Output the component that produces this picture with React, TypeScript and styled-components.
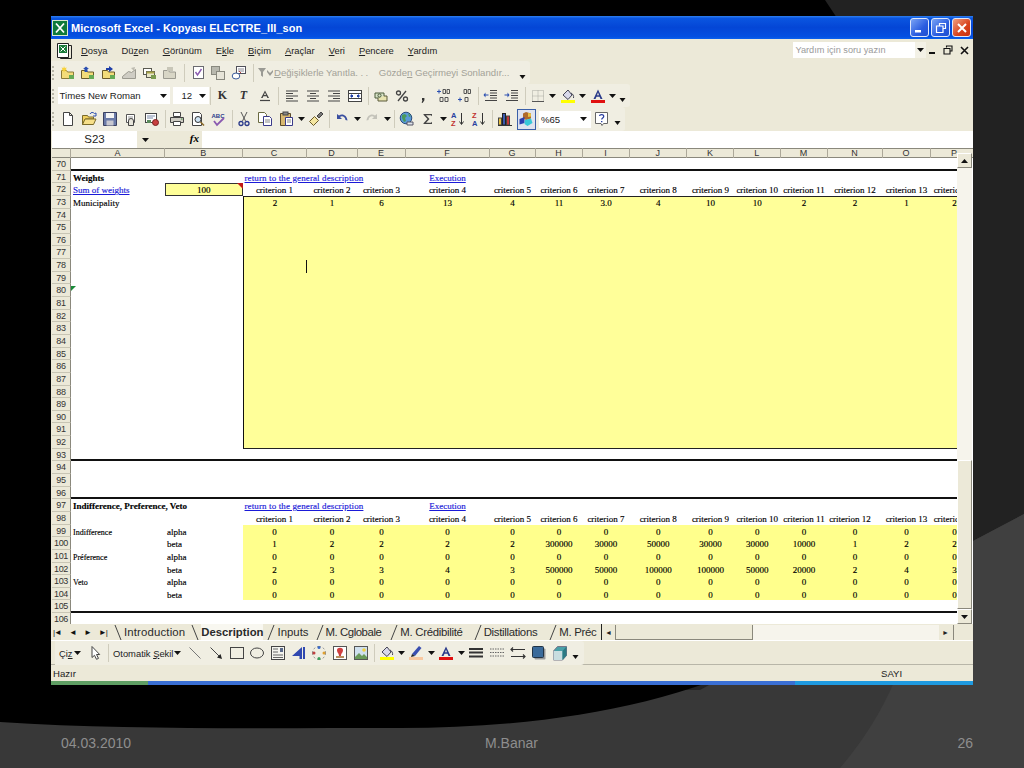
import * as React from "react";
import styled, { createGlobalStyle } from "styled-components";

const GlobalStyle = createGlobalStyle`
  html, body {
    margin: 0;
    padding: 0;
    background: #383838;
  }
`;

const UI_FONT = `"Liberation Sans", Arial, sans-serif`;
const CELL_FONT = `"Liberation Serif", "Times New Roman", serif`;

const COLUMNS = ["A", "B", "C", "D", "E", "F", "G", "H", "I", "J", "K", "L", "M", "N", "O", "P"];
const WIDTHS = [94, 77.5, 64, 51, 48, 84, 46, 47, 47, 57.5, 47, 46.5, 47, 55, 48, 48];
const GRID = WIDTHS.map((w) => `${w}px`).join(" ");

const icons: Record<string, React.ReactNode> = {
  folderNew: (
    <>
      <path d="M1.5 5.5h5l1 1.5h6v6.5h-12z" fill="#f3dc7a" stroke="#8a7a3a" />
      <path d="M4 1l.8 2 2-.6-1 1.8 1.5 1.2H5L4 7.5 3 5.4H1l1.5-1.2-1-1.8 2 .6z" fill="#f7d23c" />
      <rect x="9" y="10" width="5" height="4" fill="#66aa55" />
    </>
  ),
  folderUp: (
    <>
      <path d="M1.5 5.5h5l1 1.5h6v6.5h-12z" fill="#f3dc7a" stroke="#6a5a2a" />
      <path d="M6 1.5l3 2.5H7.5v3h-3V4H3z" fill="#2b4fb0" />
      <rect x="9" y="10" width="5" height="4" fill="#66aa55" />
    </>
  ),
  folderIn: (
    <>
      <path d="M1.5 5.5h5l1 1.5h6v6.5h-12z" fill="#f3dc7a" stroke="#6a5a2a" />
      <path d="M8 1l4 3-4 3V5H5V3h3z" fill="#1f3fa8" />
      <rect x="9" y="10" width="5" height="4" fill="#66aa55" />
    </>
  ),
  chartGrey: (
    <>
      <path d="M1.5 13.5h13v-9l-4 3-3-1-6 5z" fill="#cfcdc4" stroke="#9b9a90" />
      <path d="M10 3l4-1-1 4z" fill="#bdbbb0" />
    </>
  ),
  windows: (
    <>
      <rect x="1.5" y="3.5" width="8" height="6" fill="#fff" stroke="#5a5a50" />
      <rect x="4.5" y="6.5" width="8" height="6" fill="#e8e6c8" stroke="#5a5a50" />
      <rect x="4.5" y="6.5" width="8" height="2" fill="#a7a34a" />
      <rect x="9" y="10" width="5" height="4" fill="#7a9a50" />
    </>
  ),
  folderGrey: (
    <>
      <path d="M1.5 5.5h5l1 1.5h6v6.5h-12z" fill="#d8d6c6" stroke="#9b9a90" />
      <path d="M5 2h6v4H5z" fill="#c8c6b8" />
    </>
  ),
  checkDoc: (
    <>
      <rect x="3.5" y="1.5" width="10" height="12" fill="#fff" stroke="#6a6a70" />
      <path d="M5.5 7l2 3 4-6" fill="none" stroke="#8a5ab0" strokeWidth="1.4" />
    </>
  ),
  sheetsGrey: (
    <>
      <rect x="1.5" y="1.5" width="8" height="8" fill="#b8b8ae" stroke="#88887e" />
      <rect x="6.5" y="6.5" width="8" height="8" fill="#e6e4d8" stroke="#88887e" />
    </>
  ),
  mailSheet: (
    <>
      <rect x="5.5" y="1.5" width="9" height="7" fill="#fff" stroke="#50505a" />
      <path d="M7 4h6M7 6h6" stroke="#8a8a94" />
      <ellipse cx="5" cy="11" rx="3.8" ry="3" fill="#fff" stroke="#3a5a9a" />
      <path d="M8 6l2 2" stroke="#c04040" />
    </>
  ),
  alignL: <path d="M2 3h12M2 5.5h7M2 8h12M2 10.5h7M2 13h12" stroke="#444" fill="none" />,
  alignC: <path d="M2 3h12M5 5.5h6M2 8h12M5 10.5h6M2 13h12" stroke="#444" fill="none" />,
  alignR: <path d="M2 3h12M7 5.5h7M2 8h12M7 10.5h7M2 13h12" stroke="#444" fill="none" />,
  merge: (
    <>
      <rect x="1.5" y="2.5" width="13" height="11" fill="#fff" stroke="#444" />
      <path d="M1.5 5.5h13M1.5 10.5h13" stroke="#444" />
      <path d="M3 8h3M10 8h3M6 8l-1.5-1.3v2.6zM10 8l1.5-1.3v2.6z" stroke="#1f3fa8" fill="#1f3fa8" />
    </>
  ),
  currency: (
    <>
      <path d="M2 5h9v5H2z" fill="#d8e4c8" stroke="#4a5a3a" />
      <path d="M11 8h3v5H5v-3" fill="#e8e4b0" stroke="#5a5a3a" />
      <ellipse cx="6.5" cy="7.5" rx="1.6" ry="1.6" fill="none" stroke="#4a5a3a" />
    </>
  ),
  percent: (
    <>
      <circle cx="4.5" cy="5" r="2" fill="none" stroke="#444" strokeWidth="1.3" />
      <circle cx="11.5" cy="11" r="2" fill="none" stroke="#444" strokeWidth="1.3" />
      <path d="M12 3L4 13" stroke="#444" strokeWidth="1.3" />
    </>
  ),
  comma: <path d="M7 10h2.4v2.2L7.6 15l-1-.4 1-2.4H7z" fill="#333" />,
  incDec: (
    <>
      <path d="M1 3.5h4M3 1.5v4" stroke="#2b4fb0" />
      <path d="M7 1.5h2.5v4H7zM11 1.5h2.5v4H11z" fill="none" stroke="#555" />
      <path d="M4 9.5h3v4H4zM9 9.5h3v4H9z" fill="none" stroke="#555" />
    </>
  ),
  decDec: (
    <>
      <path d="M7 1.5h2.5v4H7zM11 1.5h2.5v4H11z" fill="none" stroke="#555" />
      <path d="M1 11.5h4M3 9.5v4" stroke="#2b4fb0" />
      <path d="M8 9.5h3v4H8z" fill="none" stroke="#555" />
    </>
  ),
  outdent: (
    <>
      <path d="M7 2.5h7M7 5h7M7 7.5h7M7 10h7M2 12.5h12" stroke="#444" fill="none" />
      <path d="M5.5 6.5h-3v-2l-2 2.5 2 2.5v-2h3z" fill="#2b4fb0" />
    </>
  ),
  indent: (
    <>
      <path d="M7 2.5h7M7 5h7M7 7.5h7M7 10h7M2 12.5h12" stroke="#444" fill="none" />
      <path d="M.5 6.5h3v-2l2 2.5-2 2.5v-2h-3z" fill="#2b4fb0" />
    </>
  ),
  borders: (
    <>
      <path d="M2.5 2.5h11v11h-11zM8 2.5v11M2.5 8h11" fill="none" stroke="#a8a8a0" strokeDasharray="1 1" />
      <path d="M2 13.5h12" stroke="#555" />
    </>
  ),
  fill: (
    <>
      <path d="M3 7l5-5 4 5-4 4.5z" fill="#d8d8ea" stroke="#445" />
      <path d="M11 5c2 1 3 3 2.5 5" stroke="#445" fill="none" />
      <rect x="1" y="12" width="14" height="3" fill="#ffff00" />
    </>
  ),
  fontColor: (
    <>
      <path d="M8 1.5L3.5 11h2l1-2.3h3l1 2.3h2zM7 7.2L8 4.5l1 2.7z" fill="#2a3a8a" />
      <rect x="1" y="12" width="14" height="3" fill="#e01010" />
    </>
  ),
  fontUnder: (
    <>
      <path d="M8 2.5L4 10h1.6l.8-1.8h3.2l.8 1.8H12zM7 7l1-2.4L9 7z" fill="#444" />
      <path d="M3 12.5h10" stroke="#444" strokeWidth="1.2" />
    </>
  ),
  newDoc: <path d="M3.5 1.5h6l3 3v10h-9zM9.5 1.5v3h3" fill="#fff" stroke="#444" />,
  open: (
    <>
      <path d="M1.5 4.5h5l1 1.5h5v2h-8l-3 5.5z" fill="#f0d060" stroke="#7a6a2a" />
      <path d="M1.5 13.5l2.5-5.5h11l-2.5 5.5z" fill="#f7e08a" stroke="#7a6a2a" />
      <path d="M9 3c1-2 3-2 4.500-.5L15 2v3h-3" fill="none" stroke="#2b4fb0" />
    </>
  ),
  save: (
    <>
      <path d="M1.500 1.500h13v13h-13z" fill="#6a7aa8" stroke="#3a4060" />
      <rect x="4" y="2" width="8" height="5" fill="#f4f4f4" />
      <rect x="4.500" y="9.500" width="7" height="5" fill="#c8c8d0" />
    </>
  ),
  permission: (
    <>
      <path d="M3.500 3.500h8v8h-8z" fill="#fff" stroke="#555" />
      <path d="M5 6h5M5 8h5" stroke="#999" />
      <path d="M5.500 14.500V10a2.500 2.500 0 0 1 5 0v4.500z" fill="#e8e6dc" stroke="#444" />
    </>
  ),
  mailAttach: (
    <>
      <rect x="1.500" y="2.500" width="11" height="9" fill="#fff" stroke="#444" />
      <path d="M3 5h8M3 7h6" stroke="#7a8aa8" />
      <circle cx="11.500" cy="11.500" r="3" fill="#c84040" stroke="#7a2020" />
      <path d="M3 9h4v3H3z" fill="#5a8a5a" />
    </>
  ),
  print: (
    <>
      <path d="M4.500 1.500h7v4h-7z" fill="#fff" stroke="#444" />
      <path d="M1.500 6.500h13v5h-13z" fill="#cfcdc4" stroke="#444" />
      <path d="M4.500 10.500h7v4h-7z" fill="#fff" stroke="#444" />
      <path d="M12 8h1.500" stroke="#3a8a3a" />
    </>
  ),
  preview: (
    <>
      <path d="M2.500 1.500h7l2 2v11h-9z" fill="#fff" stroke="#444" />
      <circle cx="8" cy="8.500" r="3" fill="#cfe4f4" stroke="#333" />
      <path d="M10.500 11l3.500 3.500" stroke="#8a6a2a" strokeWidth="1.600" />
    </>
  ),
  spell: (
    <>
      <text x="0.500" y="6.500" fontFamily={UI_FONT} fontSize="6" fontWeight="700" fill="#2b3a8a">
        ABC
      </text>
      <path d="M3 10l3 4 7-7" fill="none" stroke="#8a5ab0" strokeWidth="1.800" />
    </>
  ),
  cut: (
    <>
      <path d="M5 1l4.500 9M11 1L6.500 10" stroke="#555" fill="none" />
      <circle cx="5" cy="12.500" r="2" fill="none" stroke="#2b3a8a" strokeWidth="1.300" />
      <circle cx="11" cy="12.500" r="2" fill="none" stroke="#2b3a8a" strokeWidth="1.300" />
    </>
  ),
  copy: (
    <>
      <path d="M1.500 1.500h6l2 2v8h-8z" fill="#fff" stroke="#6a6a40" />
      <path d="M6.500 5.500h6l2 2v7h-8z" fill="#fff" stroke="#3a3a8a" />
      <path d="M8 9h5M8 11h5" stroke="#888" />
    </>
  ),
  paste: (
    <>
      <path d="M2.500 2.500h10v12h-10z" fill="#d8b870" stroke="#5a4a2a" />
      <rect x="5" y="1" width="5" height="3" fill="#888" stroke="#444" />
      <path d="M7.500 6.500h7v8h-7z" fill="#fff" stroke="#3a3a8a" />
      <path d="M9 9h4M9 11h4" stroke="#888" />
    </>
  ),
  brush: (
    <>
      <path d="M1.500 10.500l5-5 4 4-5 5z" fill="#f4e6a0" stroke="#6a5a2a" />
      <path d="M9 5l4-4 2 2-4 4z" fill="#777" stroke="#444" />
    </>
  ),
  undo: (
    <path
      d="M3 3v5h5L6 6c2-1.500 5-.5 5.500 3l2 .5C13 4.500 8.500 2 5 4.500z"
      fill="#3a4fa0"
    />
  ),
  redo: (
    <path
      d="M13 3v5H8l2-2C8 4.500 5 5.500 4.500 9l-2 .5C3 4.500 7.500 2 11 4.500z"
      fill="#c4c3ba"
    />
  ),
  globe: (
    <>
      <circle cx="7" cy="7" r="5.800" fill="#5a9ad8" stroke="#2a4a7a" />
      <path d="M3 4l3-1 2 2-2 2 1 3-2 1-2-4zM9 2l3 3-2 1z" fill="#4a9a5a" />
      <path d="M8 11h6v3H8z" fill="#dfe4ea" stroke="#556" />
    </>
  ),
  sigma: <path d="M3.500 3h8.500v2.200L11 4.300H6l3.500 3.700L6 11.700h5l1-1V13H3.500v-.8L7.500 8l-4-4.200z" fill="#444" />,
  sortAZ: (
    <>
      <text x="1" y="7" fontFamily={UI_FONT} fontSize="7.500" fontWeight="700" fill="#2b3fa0">
        A
      </text>
      <text x="1" y="15" fontFamily={UI_FONT} fontSize="7.500" fontWeight="700" fill="#c03030">
        Z
      </text>
      <path d="M11.500 2v11M9.500 10.500l2 3 2-3" stroke="#333" fill="none" />
    </>
  ),
  sortZA: (
    <>
      <text x="1" y="7" fontFamily={UI_FONT} fontSize="7.500" fontWeight="700" fill="#c03030">
        Z
      </text>
      <text x="1" y="15" fontFamily={UI_FONT} fontSize="7.500" fontWeight="700" fill="#2b3fa0">
        A
      </text>
      <path d="M11.500 2v11M9.500 10.500l2 3 2-3" stroke="#333" fill="none" />
    </>
  ),
  chart: (
    <>
      <rect x="1.500" y="7" width="3" height="7" fill="#e8c040" stroke="#444" />
      <rect x="5.500" y="2.500" width="3" height="11.500" fill="#3a5ab0" stroke="#222" />
      <rect x="9.500" y="5" width="3" height="9" fill="#c83838" stroke="#444" />
      <path d="M1 14.500h14" stroke="#333" />
    </>
  ),
  drawing: (
    <>
      <path d="M8 1l5 1.500v5L8 9 5 7V2.500z" fill="#b06a2a" />
      <path d="M1.500 8l5-2v6l-5 1.500z" fill="#2b3fb0" />
      <path d="M7 9l6-1.500 1.500 4.500-5 3-3-2z" fill="#38c8d8" />
      <path d="M10 2l3 .5v3l-3 .5z" fill="#e8c040" />
    </>
  ),
  help: (
    <>
      <path d="M1.500 1.500h12v11h-4l-1.500 2-1-2h-5.500z" fill="#fff" stroke="#666" />
      <path d="M5.500 5c.3-2 4.300-2 4.200.4 0 1.500-2 1.500-2 3" fill="none" stroke="#2b3fa0" strokeWidth="1.300" />
      <path d="M7 10h1.400v1.300H7z" fill="#2b3fa0" />
    </>
  ),
  cursor: <path d="M4 1.500v11l2.500-2.200 2 4 2-.9-2-3.900h3.200z" fill="#fff" stroke="#444" />,
  line: <path d="M2.500 2.500l11 11" stroke="#777" />,
  arrow: (
    <>
      <path d="M2.500 2.500l9 9" stroke="#444" />
      <path d="M14 14l-5-1.500 3.500-3.500z" fill="#222" />
    </>
  ),
  rect: <rect x="1.500" y="2.500" width="13" height="11" fill="none" stroke="#444" />,
  ellipse: <ellipse cx="8" cy="8" rx="6.500" ry="5" fill="none" stroke="#444" />,
  textBox: (
    <>
      <rect x="1.500" y="1.500" width="13" height="13" fill="#f4f4ee" stroke="#444" />
      <path d="M3 4h5M3 7h5M3 10h10M3 12.500h10" stroke="#666" />
      <path d="M10 3h3v4h-3z" fill="#5a6a8a" />
    </>
  ),
  wordArt: (
    <>
      <path d="M1 11L11 2v12H8.500v-3H5L3.500 11z" fill="#3048b0" />
      <path d="M13 2v12" stroke="#3048b0" strokeWidth="2" />
    </>
  ),
  diagram: (
    <>
      <path d="M8 1.500a6.500 6.500 0 0 1 6.500 6.500M14.500 8A6.500 6.500 0 0 1 8 14.500M8 14.500A6.500 6.500 0 0 1 1.500 8M1.500 8A6.500 6.500 0 0 1 8 1.500" fill="none" stroke="#888" strokeDasharray="2 2" />
      <circle cx="8" cy="2.500" r="1.500" fill="#3a6ac8" />
      <circle cx="13" cy="8" r="1.500" fill="#e0a030" />
      <circle cx="8" cy="13.500" r="1.500" fill="#3aa05a" />
      <circle cx="3" cy="8" r="1.500" fill="#c04040" />
    </>
  ),
  clipart: (
    <>
      <rect x="1.500" y="1.500" width="13" height="13" fill="#fff" stroke="#555" />
      <path d="M5 5c0-3 6-3 6 0s-2 3-2 6H7c0-3-2-3-2-6z" fill="#d04040" />
      <path d="M4 12h8" stroke="#a06a2a" strokeWidth="1.500" />
    </>
  ),
  picture: (
    <>
      <rect x="1.500" y="1.500" width="13" height="13" fill="#cfe0ee" stroke="#555" />
      <path d="M2 12l4-4 3 3 2-2 3 3v2H2z" fill="#6a9a5a" />
      <circle cx="11" cy="5" r="1.800" fill="#f0d040" />
    </>
  ),
  penColor: (
    <>
      <path d="M4 9l7-8 2.500 2L7 11z" fill="#3a4fb0" />
      <path d="M4 9l3 2-4 1z" fill="#222" />
      <rect x="1" y="12" width="14" height="3" fill="#f8c8a0" />
    </>
  ),
  lineStyle: (
    <path d="M1 4h14M1 7.500h14M1 11.500h14" stroke="#333" strokeWidth="1.800" />
  ),
  dashStyle: (
    <path d="M1 4h14M1 7.500h14M1 11h14" stroke="#666" strokeDasharray="1.500 1" />
  ),
  arrowStyle: (
    <path d="M1 4.500h14M1 11.500h14M3 2.500L1 4.500l2 2M13 9.500l2 2-2 2" stroke="#333" fill="none" strokeWidth="1.200" />
  ),
  shadow: (
    <>
      <rect x="3.500" y="3.500" width="11" height="11" rx="1" fill="#999" />
      <rect x="1.500" y="1.500" width="11" height="11" rx="1" fill="#3a6a9a" stroke="#234" />
    </>
  ),
  cube: (
    <>
      <path d="M1.500 6l4-4.500h9v9l-4 4.500h-9z" fill="#4aa0a8" stroke="#778" />
      <path d="M1.500 6h9v9h-9z" fill="#c8dde0" />
      <path d="M10.500 6l4-4.500v9l-4 4.500z" fill="#2c7a84" />
    </>
  ),
};

const Glyph = ({ name }: { name: string }) => (
  <svg width="16" height="16" viewBox="0 0 16 16">
    {icons[name]}
  </svg>
);

const Arrow = () => (
  <svg width="7" height="4" viewBox="0 0 7 4">
    <path d="M0 0h7L3.500 4z" fill="#111" />
  </svg>
);

const Chevron = () => (
  <svg width="7" height="5" viewBox="0 0 7 5">
    <path d="M.5 1h6L3.500 5z" fill="#111" />
  </svg>
);

type ToolProps = { items: string[]; btn?: number };

// "|n" = separator n px wide, "v" = small dropdown arrow, ">" = toolbar chevron
const Tools = ({ items, btn = 21 }: ToolProps) => (
  <>
    {items.map((item, i) => {
      if (item[0] === "|") return <Sep key={i} $w={Number(item.slice(1))} />;
      if (item === "v")
        return (
          <Drop key={i}>
            <Arrow />
          </Drop>
        );
      if (item === ">")
        return (
          <More key={i}>
            <Chevron />
          </More>
        );
      return (
        <Btn key={i} $w={btn}>
          <Glyph name={item} />
        </Btn>
      );
    })}
  </>
);

type Cell = { text?: string; kind?: "link" | "wide" | "bold" | "small"; align?: "left" | "center" };

const CRITERIA = Array.from({ length: 14 }, (_, i) => `criterion ${i + 1}`);
const ZEROS = Array(14).fill("0") as string[];

const heading = (title: string): Record<number, Cell> => ({
  0: { text: title, kind: "bold", align: "left" },
  2: { text: "return to the general description", kind: "wide", align: "left" },
  5: { text: "Execution", kind: "link" },
});

const fromValues = (values: string[]): Record<number, Cell> =>
  Object.fromEntries(values.map((v, i) => [i + 2, { text: v }]));

const labels = (a: string, b: string): Record<number, Cell> => ({
  0: { text: a, kind: "small", align: "left" },
  1: { text: b, align: "left" },
});

const ROW_CONTENT: Record<number, Record<number, Cell>> = {
  71: heading("Weights"),
  72: {
    0: { text: "Sum of weights", kind: "link", align: "left" },
    1: { text: "100" },
    ...fromValues(CRITERIA),
  },
  73: {
    0: { text: "Municipality", align: "left" },
    ...fromValues(["2", "1", "6", "13", "4", "11", "3.0", "4", "10", "10", "2", "2", "1", "2"]),
  },
  97: heading("Indifference, Preference, Veto"),
  98: fromValues(CRITERIA),
  99: { ...labels("Indifference", "alpha"), ...fromValues(ZEROS) },
  100: {
    ...labels("", "beta"),
    ...fromValues(["1", "2", "2", "2", "2", "300000", "30000", "50000", "30000", "30000", "10000", "1", "2", "2"]),
  },
  101: { ...labels("Préference", "alpha"), ...fromValues(ZEROS) },
  102: {
    ...labels("", "beta"),
    ...fromValues(["2", "3", "3", "4", "3", "500000", "50000", "100000", "100000", "50000", "20000", "2", "4", "3"]),
  },
  103: { ...labels("Veto", "alpha"), ...fromValues(ZEROS) },
  104: { ...labels("", "beta"), ...fromValues(ZEROS) },
};

const RULED: Record<number, number> = { 70: 2, 93: 2, 96: 2, 105: 2 };
const ROW_NUMBERS = Array.from({ length: 37 }, (_, i) => 70 + i);

const isFilled = (row: number, col: number) =>
  col >= 2 && ((row >= 73 && row <= 92) || (row >= 99 && row <= 104));

const SheetRow = ({ n }: { n: number }) => {
  const content = ROW_CONTENT[n] || {};
  return (
    <RowLine>
      <RowNumber>{n}</RowNumber>
      <RowCells $rule={RULED[n] || 0}>
        {COLUMNS.map((c, col) => {
          const cell = content[col];
          const linked = cell?.kind === "link" || cell?.kind === "wide";
          return (
            <GridCell
              key={c}
              $fill={isFilled(n, col)}
              $soft={n >= 99}
              $edge={col === 2 && n >= 73 && n <= 92}
              $over={n === 73 && col >= 2}
              $under={n === 92 && col >= 2}
              $boxed={n === 72 && col === 1}
              $align={cell?.align || "center"}
              $kind={cell?.kind}
              $nudge={n === 98 && col === 13}
            >
              {linked ? <a>{cell?.text}</a> : cell?.text}
              {n === 72 && col === 1 && <CommentMark />}
            </GridCell>
          );
        })}
      </RowCells>
    </RowLine>
  );
};

type TabSpec = { label: string; gap: number; lean: "back" | "fwd"; track: number; active?: boolean };

const TABS: TabSpec[] = [
  { label: "Introduction", gap: 14, lean: "back", track: 0.15 },
  { label: "Description", gap: 16, lean: "back", track: 0, active: true },
  { label: "Inputs", gap: 14, lean: "fwd", track: 0 },
  { label: "M. Cglobale", gap: 17, lean: "fwd", track: -0.45 },
  { label: "M. Crédibilité", gap: 19, lean: "fwd", track: -0.3 },
  { label: "Distillations", gap: 21, lean: "fwd", track: -0.3 },
  { label: "M. Préc", gap: 22, lean: "fwd", track: -0.3 },
];

const Slash = ({ w, lean }: { w: number; lean: "back" | "fwd" }) => (
  <svg width={w} height="15" viewBox={`0 0 ${w} 15`}>
    <path
      d={lean === "back" ? `M${w - 9} 0l6 15` : `M${w - 3} 0l-6 15`}
      stroke="#444"
      fill="none"
    />
  </svg>
);

const App = () => (
  <>
    <GlobalStyle />
    <Page>
      <Backdrop viewBox="0 0 1024 768" aria-hidden="true">
        <path d="M825 0H1024V514L973 541 700 690 400 690 600 300z" fill="#222" />
        <path d="M0 0H825L845 30 800 640C700 700 560 728 400 728 260 728 120 730 0 722z" fill="#000" />
        <path d="M895 680C880 715 860 745 840 768H1024V514L973 541z" fill="#404040" />
      </Backdrop>
      <Excel>
        <TitleBar>
          <AppBadge>
            <svg width="16" height="16" viewBox="0 0 16 16">
              <rect x=".5" y=".5" width="15" height="15" fill="#0e7a3a" stroke="#d8e8d0" />
              <path d="M4 3.500l8 9M12 3.500l-8 9" stroke="#fff" strokeWidth="1.800" />
            </svg>
          </AppBadge>
          <TitleText>Microsoft Excel - Kopyası ELECTRE_III_son</TitleText>
          <WindowButtons>
            <WinBtn>
              <svg width="12" height="12" viewBox="0 0 12 12">
                <rect x="1" y="8" width="6" height="2.500" fill="#fff" />
              </svg>
            </WinBtn>
            <WinBtn>
              <svg width="12" height="12" viewBox="0 0 12 12">
                <path d="M4.500 3.500V1.500h6v5H8.500M1.500 4h6.500v6.500H1.500z" fill="none" stroke="#fff" strokeWidth="1.200" />
              </svg>
            </WinBtn>
            <WinBtn $close>
              <svg width="12" height="12" viewBox="0 0 12 12">
                <path d="M2 2l8 8M10 2l-8 8" stroke="#fff" strokeWidth="2" />
              </svg>
            </WinBtn>
          </WindowButtons>
        </TitleBar>

        <MenuBar>
          <MenuIcon>
            <svg width="17" height="17" viewBox="0 0 17 17">
              <path d="M1.500 1.500h11v14h-11z" fill="#fff" stroke="#222" />
              <path d="M12.500 3.500h3v13h-11v-1" fill="none" stroke="#222" />
              <rect x="3" y="3" width="8" height="8" fill="#1a7a3a" />
              <path d="M4.500 4.500l5 5M9.500 4.500l-5 5" stroke="#fff" />
            </svg>
          </MenuIcon>
          <MenuItem><u>D</u>osya</MenuItem>
          <MenuItem>Dü<u>z</u>en</MenuItem>
          <MenuItem><u>G</u>örünüm</MenuItem>
          <MenuItem>E<u>k</u>le</MenuItem>
          <MenuItem><u>B</u>içim</MenuItem>
          <MenuItem><u>A</u>raçlar</MenuItem>
          <MenuItem><u>V</u>eri</MenuItem>
          <MenuItem><u>P</u>encere</MenuItem>
          <MenuItem><u>Y</u>ardım</MenuItem>
          <HelpArea>
            <HelpBox>
              <span>Yardım için soru yazın</span>
              <HelpDrop>
                <Arrow />
              </HelpDrop>
            </HelpBox>
            <DocControl $w={13.5}>
              <svg width="9" height="9" viewBox="0 0 9 9">
                <rect x="1" y="6" width="6" height="2" fill="#111" />
              </svg>
            </DocControl>
            <DocControl $w={17}>
              <svg width="10" height="10" viewBox="0 0 10 10">
                <path d="M3.500 2.500v-1.500h5.500v5H7.500M1 3.500h6v5.500H1z" fill="none" stroke="#111" strokeWidth="1.100" />
              </svg>
            </DocControl>
            <DocControl $w={17}>
              <svg width="9" height="9" viewBox="0 0 9 9">
                <path d="M1 1l7 7M8 1L1 8" stroke="#111" strokeWidth="1.600" />
              </svg>
            </DocControl>
          </HelpArea>
        </MenuBar>

        <ToolRow $h={23}>
          <Strip>
            <Handle />
            <Tools
              btn={20.5}
              items={["folderNew", "folderUp", "folderIn", "chartGrey", "windows", "folderGrey", "|7", "checkDoc", "sheetsGrey", "mailSheet", "|7"]}
            />
            <ReviewIcon>
              <svg width="17" height="11" viewBox="0 0 17 11">
                <path d="M1 1h8L6 5v5L4 8.500V5zM10 3l3 3 3-3v2l-3 4-3-4z" fill="#9a9a94" />
              </svg>
            </ReviewIcon>
            <DimText>
              <u>D</u>eğişiklerle Yanıtla<DimDots>...</DimDots>
            </DimText>
            <DimText>
              Gözde<u>n</u> Geçirmeyi Sonlandır...
            </DimText>
            <Tools items={[">"]} />
          </Strip>
        </ToolRow>

        <ToolRow $h={23}>
          <Strip>
            <Handle />
            <Combo $w={112}>
              <span>Times New Roman</span>
              <Arrow />
            </Combo>
            <Combo $w={36} $gap={3}>
              <SizeText>12</SizeText>
              <Arrow />
            </Combo>
            <Sep $w={3.500} />
            <Letter>K</Letter>
            <Letter $italic>T</Letter>
            <Btn $w={21}>
              <Glyph name="fontUnder" />
            </Btn>
            <Tools
              items={["|6", "alignL", "alignC", "alignR", "merge", "|5", "currency", "percent", "comma", "incDec", "decDec", "|5", "outdent", "indent", "|5", "borders", "v", "fill", "v", "fontColor", "v", ">"]}
            />
          </Strip>
        </ToolRow>

        <ToolRow $h={24}>
          <Strip>
            <Handle />
            <Tools
              items={["newDoc", "open", "save", "permission", "mailAttach", "|4", "print", "preview", "spell", "|4", "cut", "copy", "paste", "v", "brush", "|5", "undo", "v", "redo", "v", "|5", "globe", "sigma", "v", "sortAZ", "sortZA", "|5", "chart"]}
            />
            <ActiveBtn>
              <Glyph name="drawing" />
            </ActiveBtn>
            <ZoomBox>
              <span>%65</span>
              <Arrow />
            </ZoomBox>
            <Tools items={["help", ">"]} />
          </Strip>
        </ToolRow>

        <FormulaBar>
          <NameBox>S23</NameBox>
          <NameDrop>
            <Arrow />
          </NameDrop>
          <FxLabel>fx</FxLabel>
          <FormulaInput />
        </FormulaBar>

        <ColumnHeader>
          <Corner />
          <ColumnCells>
            {COLUMNS.map((c) => (
              <ColumnCell key={c}>{c}</ColumnCell>
            ))}
          </ColumnCells>
        </ColumnHeader>

        <SheetBody>
          <SheetMain>
            {ROW_NUMBERS.map((n) => (
              <SheetRow key={n} n={n} />
            ))}
            <TextCursor />
            <ErrorMark />
          </SheetMain>
          <VScroll>
            <ScrollBtn>
              <svg width="7" height="4" viewBox="0 0 7 4">
                <path d="M0 4h7L3.500 0z" fill="#111" />
              </svg>
            </ScrollBtn>
            <ScrollTrack />
            <ScrollThumb />
            <ScrollBtn>
              <Arrow />
            </ScrollBtn>
          </VScroll>
        </SheetBody>

        <TabBar>
          <TabNav>
            <NavGlyph>|◄</NavGlyph>
            <NavGlyph>◄</NavGlyph>
            <NavGlyph>►</NavGlyph>
            <NavGlyph>►|</NavGlyph>
          </TabNav>
          <TabList>
            {TABS.map((t) => (
              <React.Fragment key={t.label}>
                <Slash w={t.gap} lean={t.lean} />
                <Tab $active={t.active} $track={t.track}>
                  {t.label}
                </Tab>
              </React.Fragment>
            ))}
          </TabList>
          <HScroll>
            <HBtn>◄</HBtn>
            <HThumb />
            <HTrack />
            <HBtn>►</HBtn>
          </HScroll>
          <HCorner />
        </TabBar>

        <DrawBar>
          <Strip>
            <DrawLabel $w={30}>
              <span>
                Çi<u>z</u>
              </span>
              <Arrow />
            </DrawLabel>
            <Tools btn={21} items={["cursor", "|3"]} />
            <DrawLabel $w={76}>
              <span>
                Otomatik <u>Ş</u>ekil
              </span>
              <Arrow />
            </DrawLabel>
            <Tools
              btn={20.7}
              items={["line", "arrow", "rect", "ellipse", "textBox", "wordArt", "diagram", "clipart", "picture", "|5", "fill", "v"]}
            />
            <Tools
              items={["penColor", "v", "fontColor", "v", "lineStyle", "dashStyle", "arrowStyle", "shadow", "cube", ">"]}
            />
          </Strip>
        </DrawBar>

        <StatusBar>
          <span>Hazır</span>
          <StatusNum>SAYI</StatusNum>
        </StatusBar>
        <TaskStrip>
          <TaskPart $w={97} $c="#5f9e63" />
          <TaskPart $w={647} $c="#3a6fd4" />
          <TaskPart $w={178} $c="#1f9ae0" />
        </TaskStrip>
      </Excel>
      <Footer>
        <span>04.03.2010</span>
        <FooterMiddle>M.Banar</FooterMiddle>
        <FooterRight>26</FooterRight>
      </Footer>
    </Page>
  </>
);

const Page = styled.div`
  position: relative;
  width: 1024px;
  height: 768px;
  padding-top: 16px;
  box-sizing: border-box;
  overflow: hidden;
  font-family: ${UI_FONT};
`;

const Backdrop = styled.svg`
  position: absolute;
  top: 0;
  left: 0;
  width: 1024px;
  height: 768px;
`;

const Excel = styled.div`
  position: relative;
  width: 922px;
  margin-left: 51px;
  background: #ece9d8;
  display: flex;
  flex-direction: column;
`;

const TitleBar = styled.div`
  height: 23px;
  display: flex;
  align-items: center;
  padding: 0 2px 0 1px;
  background: linear-gradient(#2f80f0 0, #0a55e0 10%, #0446d6 50%, #0450e2 90%, #0b62ee 100%);
`;

const AppBadge = styled.div`
  width: 19px;
  display: flex;
`;

const TitleText = styled.div`
  flex: 1;
  color: #fff;
  font-size: 11px;
  font-weight: 700;
  letter-spacing: 0.05px;
  white-space: nowrap;
`;

const WindowButtons = styled.div`
  display: flex;
  gap: 2px;
`;

const WinBtn = styled.div<{ $close?: boolean }>`
  width: 19px;
  height: 19px;
  box-sizing: border-box;
  border: 1px solid #dfe8fb;
  border-radius: 3px;
  display: flex;
  align-items: center;
  justify-content: center;
  background: ${(p) =>
    p.$close
      ? "linear-gradient(135deg, #f0a080, #d8421c 60%, #c83010)"
      : "linear-gradient(135deg, #7aa4f4, #2a5ce0 60%, #2050d0)"};
`;

const MenuBar = styled.div`
  height: 22px;
  display: flex;
  align-items: center;
  padding-left: 5px;
  font-size: 9.4px;
  color: #222;
`;

const MenuIcon = styled.div`
  width: 18px;
  display: flex;
`;

const MenuItem = styled.div`
  padding: 0 7px;
  white-space: nowrap;
`;

const HelpArea = styled.div`
  margin-left: auto;
  display: flex;
  align-items: center;
`;

const HelpBox = styled.div`
  width: 133px;
  height: 16px;
  display: flex;
  align-items: center;
  justify-content: space-between;
  box-sizing: border-box;
  padding-left: 3px;
  background: #fff;
  color: #9a9a9a;
  font-size: 9.2px;
`;

const HelpDrop = styled.div`
  width: 11px;
  height: 16px;
  background: #f3f1e6;
  display: flex;
  align-items: center;
  justify-content: center;
`;

const DocControl = styled.div<{ $w: number }>`
  width: ${(p) => p.$w}px;
  display: flex;
  justify-content: center;
`;

const ToolRow = styled.div<{ $h: number }>`
  height: ${(p) => p.$h}px;
  display: flex;
`;

const Strip = styled.div`
  display: flex;
  align-items: center;
  padding-right: 3px;
  background: #f0eee2;
  border-radius: 0 3px 3px 0;
`;

const Handle = styled.div`
  width: 2px;
  height: 14px;
  margin: 0 1.500px 0 1px;
  border-left: 2px dotted #b8b6a8;
`;

const Btn = styled.div<{ $w: number }>`
  width: ${(p) => p.$w}px;
  height: 20px;
  flex: none;
  display: flex;
  align-items: center;
  justify-content: center;
`;

const ActiveBtn = styled.div`
  width: 19px;
  height: 21px;
  margin: 0 1px;
  flex: none;
  box-sizing: border-box;
  border: 1px solid #3a5fa8;
  background: #dfe3ee;
  display: flex;
  align-items: center;
  justify-content: center;
`;

const Sep = styled.div<{ $w: number }>`
  width: ${(p) => p.$w}px;
  height: 18px;
  flex: none;
  position: relative;

  &::after {
    content: "";
    position: absolute;
    left: 50%;
    top: 0;
    bottom: 0;
    width: 1px;
    background: #cfccbc;
  }
`;

const Drop = styled.div`
  width: 9px;
  flex: none;
  display: flex;
  justify-content: center;
`;

const More = styled.div`
  width: 10px;
  flex: none;
  display: flex;
  justify-content: center;
  padding-top: 7px;
`;

const ReviewIcon = styled.div`
  width: 18px;
  flex: none;
  display: flex;
  justify-content: center;
`;

const DimText = styled.div`
  padding-right: 8px;
  color: #a3a298;
  font-size: 9.6px;
  white-space: nowrap;
`;

const DimDots = styled.span`
  letter-spacing: 2.5px;
`;

const Combo = styled.div<{ $w: number; $gap?: number }>`
  width: ${(p) => p.$w}px;
  height: 17px;
  flex: none;
  margin-left: ${(p) => p.$gap || 0}px;
  box-sizing: border-box;
  padding: 0 3px 0 2px;
  background: #fff;
  display: flex;
  align-items: center;
  justify-content: space-between;
  font-size: 9.6px;
  color: #222;
`;

const SizeText = styled.span`
  padding-left: 7px;
`;

const Letter = styled.div<{ $italic?: boolean }>`
  width: 21px;
  flex: none;
  text-align: center;
  font-family: ${CELL_FONT};
  font-size: 12px;
  font-weight: 700;
  font-style: ${(p) => (p.$italic ? "italic" : "normal")};
  color: #333;
`;

const ZoomBox = styled.div`
  width: 52px;
  height: 17px;
  margin-left: 2.500px;
  flex: none;
  box-sizing: border-box;
  padding: 0 4px 0 2px;
  background: #fff;
  display: flex;
  align-items: center;
  justify-content: space-between;
  font-size: 9.6px;
  color: #222;
`;

const FormulaBar = styled.div`
  height: 17px;
  display: flex;
  align-items: stretch;
`;

const NameBox = styled.div`
  width: 85px;
  margin-left: 1px;
  background: #fff;
  text-align: center;
  font-size: 11.5px;
  line-height: 16px;
  color: #222;
`;

const NameDrop = styled.div`
  width: 16px;
  display: flex;
  align-items: center;
  justify-content: center;
`;

const FxLabel = styled.div`
  width: 49px;
  padding-right: 3px;
  box-sizing: border-box;
  text-align: right;
  font-family: ${CELL_FONT};
  font-style: italic;
  font-weight: 700;
  font-size: 11px;
  line-height: 15px;
`;

const FormulaInput = styled.div`
  flex: 1;
  background: #fff;
`;

const ColumnHeader = styled.div`
  height: 10px;
  display: flex;
  margin-left: 1px;
  overflow: hidden;
  box-shadow: inset 0 1px 0 #8a887c, inset 0 -1px 0 #8a887c;
`;

const Corner = styled.div`
  width: 19px;
  flex: none;
  box-sizing: border-box;
  border-right: 1px solid #aca899;
`;

const ColumnCells = styled.div`
  display: grid;
  grid-template-columns: ${GRID};
  flex: none;
`;

const ColumnCell = styled.div`
  box-sizing: border-box;
  border-right: 1px solid #aca899;
  text-align: center;
  font-size: 9px;
  line-height: 11px;
  color: #333;
`;

const SheetBody = styled.div`
  height: 466px;
  display: flex;
  margin-left: 1px;
  background: #fff;
`;

const SheetMain = styled.div`
  position: relative;
  width: 905px;
  height: 466px;
  flex: none;
  overflow: hidden;
`;

const RowLine = styled.div`
  height: 12.650px;
  display: flex;
`;

const RowNumber = styled.div`
  width: 19px;
  flex: none;
  box-sizing: border-box;
  background: #ece9d8;
  border-right: 1px solid #8a887c;
  border-bottom: 1px solid #c8c5b4;
  text-align: center;
  font-size: 9px;
  line-height: 13.5px;
  letter-spacing: -0.3px;
  white-space: nowrap;
  color: #333;
`;

const RowCells = styled.div<{ $rule: number }>`
  display: grid;
  grid-template-columns: ${GRID};
  grid-template-rows: 12.650px;
  flex: none;
  box-sizing: border-box;
  border-bottom: ${(p) => (p.$rule ? `${p.$rule}px solid #111` : "none")};
`;

const GridCell = styled.div<{
  $fill: boolean;
  $soft: boolean;
  $edge: boolean;
  $over: boolean;
  $under: boolean;
  $boxed: boolean;
  $align: string;
  $kind?: string;
  $nudge: boolean;
}>`
  position: relative;
  box-sizing: border-box;
  padding: 0 ${(p) => (p.$nudge ? 10 : 0)}px 0 ${(p) => (p.$align === "left" ? 2 : 0)}px;
  background: ${(p) => (p.$fill ? (p.$soft ? "#ffff8c" : "#ffff99") : p.$boxed ? "#ffff99" : "transparent")};
  border-left: ${(p) => (p.$edge ? "1px solid #111" : "none")};
  border-bottom: ${(p) => (p.$under ? "1px solid #222" : "none")};
  box-shadow: ${(p) => (p.$over ? "inset 0 1px 0 #222" : "none")};
  outline: ${(p) => (p.$boxed ? "1px solid #333" : "none")};
  outline-offset: -1px;
  text-align: ${(p) => p.$align};
  white-space: nowrap;
  font-family: ${CELL_FONT};
  font-size: ${(p) => (p.$kind === "small" ? 8 : 9)}px;
  font-weight: ${(p) => (p.$kind === "bold" ? 700 : 400)};
  letter-spacing: ${(p) => (p.$kind === "wide" ? 0.12 : 0)}px;
  line-height: 15px;
  color: #000;
  -webkit-text-stroke: 0.15px currentColor;

  a {
    color: #1a1ad8;
    text-decoration: underline;
  }
`;

const CommentMark = styled.span`
  position: absolute;
  top: 0;
  right: 0;
  width: 0;
  height: 0;
  border-top: 6px solid #c01818;
  border-left: 6px solid transparent;
`;

const TextCursor = styled.div`
  position: absolute;
  left: 254px;
  top: 102px;
  width: 1px;
  height: 13px;
  background: #111;
`;

const ErrorMark = styled.div`
  position: absolute;
  left: 19px;
  top: 128px;
  width: 0;
  height: 0;
  border-top: 5px solid #1a8a3a;
  border-right: 5px solid transparent;
`;

const VScroll = styled.div`
  width: 15px;
  height: 471px;
  margin-top: -5px;
  position: relative;
  flex: none;
  display: flex;
  flex-direction: column;
`;

const ScrollBtn = styled.div`
  height: 15px;
  flex: none;
  box-sizing: border-box;
  background: #ece9d8;
  border: 1px solid;
  border-color: #fff #8a887c #8a887c #fff;
  display: flex;
  align-items: center;
  justify-content: center;
`;

const ScrollTrack = styled.div`
  flex: 1;
  background: #f6f4ec;
`;

const ScrollThumb = styled.div`
  height: 149px;
  flex: none;
  box-sizing: border-box;
  background: #ece9d8;
  border: 1px solid;
  border-color: #fff #8a887c #8a887c #fff;
`;

const TabBar = styled.div`
  height: 16px;
  margin-left: 1px;
  display: flex;
  align-items: center;
  overflow: hidden;
`;

const TabNav = styled.div`
  width: 58px;
  flex: none;
  box-sizing: border-box;
  padding-left: 1px;
  display: flex;
  gap: 8px;
`;

const NavGlyph = styled.span`
  font-size: 8px;
  color: #111;
  letter-spacing: -1px;
  white-space: nowrap;
`;

const TabList = styled.div`
  width: 492px;
  flex: none;
  height: 16px;
  display: flex;
  align-items: center;
  overflow: hidden;
  border-right: 1px solid #222;
  box-sizing: border-box;
`;

const Tab = styled.div<{ $active?: boolean; $track: number }>`
  flex: none;
  height: 16px;
  line-height: 16px;
  font-size: ${(p) => (p.$active ? 11.3 : 11.4)}px;
  font-weight: ${(p) => (p.$active ? 700 : 400)};
  letter-spacing: ${(p) => p.$track}px;
  color: #2a2a2a;
  background: ${(p) => (p.$active ? "#f8f7f0" : "transparent")};
  white-space: nowrap;
`;

const HScroll = styled.div`
  flex: 1;
  display: flex;
  align-items: center;
  height: 15px;
`;

const HBtn = styled.div`
  width: 13px;
  flex: none;
  text-align: center;
  font-size: 7px;
  color: #222;
`;

const HThumb = styled.div`
  width: 138px;
  height: 15px;
  flex: none;
  box-sizing: border-box;
  border-left: 1px solid #8a887c;
  border-right: 1px solid #8a887c;
  border-bottom: 1px solid #8a887c;
`;

const HTrack = styled.div`
  flex: 1;
  height: 15px;
  background: #f6f4ec;
`;

const HCorner = styled.div`
  width: 20px;
  height: 15px;
  flex: none;
  margin-left: 1px;
  box-sizing: border-box;
  border-left: 1px solid #8a887c;
`;

const DrawBar = styled.div`
  height: 25px;
  display: flex;
  box-shadow: inset 0 -1px 0 #b8b6a8;
  border-top: 1px solid #fff;
  box-sizing: border-box;
  padding-left: 4px;
`;

const DrawLabel = styled.div<{ $w: number }>`
  width: ${(p) => p.$w}px;
  flex: none;
  display: flex;
  align-items: center;
  justify-content: space-between;
  box-sizing: border-box;
  padding: 0 4px;
  font-size: 9.4px;
  color: #222;
  white-space: nowrap;
`;

const StatusBar = styled.div`
  height: 16px;
  display: flex;
  align-items: center;
  padding-left: 2px;
  font-size: 9.6px;
  color: #222;
`;

const StatusNum = styled.span`
  position: absolute;
  left: 830px;
`;

const TaskStrip = styled.div`
  height: 4px;
  display: flex;
`;

const TaskPart = styled.div<{ $w: number; $c: string }>`
  width: ${(p) => p.$w}px;
  flex: none;
  background: ${(p) => p.$c};
`;

const Footer = styled.div`
  position: relative;
  margin: 50px 51px 0 61px;
  display: grid;
  grid-template-columns: 1fr auto 1fr;
  font-size: 14px;
  color: #8e8e8e;
`;

const FooterMiddle = styled.span`
  margin-right: 11px;
`;

const FooterRight = styled.span`
  text-align: right;
`;

export default App;
